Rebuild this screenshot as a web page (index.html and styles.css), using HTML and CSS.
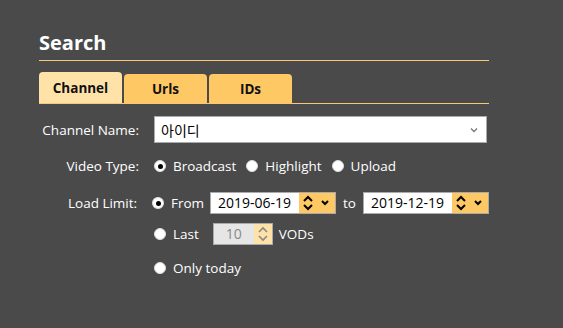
FILE: index.html
```html
<!DOCTYPE html>
<html>
	<head>
		<meta charset="utf-8" />
		<title>Search</title>
		<link rel="stylesheet" href="styles.css">
	</head>
	<body>
		<div class="panel">
			<h2 class="title">Search</h2>
			<div class="tabs">
				<span class="tab on">Channel</span>
				<span class="tab">Urls</span>
				<span class="tab">IDs</span>
			</div>
			<div class="form">
				<div class="row row-name">
					<label class="label">Channel Name:</label>
					<div class="select">
						<span class="select-text">아이디</span>
						<svg class="select-arrow" width="8" height="6" viewBox="0 0 8 6"><path d="M1 1.5 L4 4.5 L7 1.5" fill="none" stroke="#777" stroke-width="1.3"/></svg>
					</div>
				</div>
				<div class="row row-type">
					<label class="label">Video Type:</label>
					<span class="radio on"></span><span class="opt">Broadcast</span>
					<span class="radio"></span><span class="opt">Highlight</span>
					<span class="radio"></span><span class="opt">Upload</span>
				</div>
				<div class="row row-limit">
					<label class="label">Load Limit:</label>
					<span class="radio on"></span><span class="opt">From</span>
					<div class="date">
						<span class="date-text">2019-06-19</span>
						<span class="spin">
							<svg width="36" height="20" viewBox="0 0 36 20"><path d="M5 8 L9 4 L13 8 M5 12 L9 16 L13 12" fill="none" stroke="#000" stroke-width="2"/><path d="M23 8 L26 11 L29 8" fill="none" stroke="#000" stroke-width="2"/></svg>
						</span>
					</div>
					<span class="to">to</span>
					<div class="date">
						<span class="date-text">2019-12-19</span>
						<span class="spin">
							<svg width="36" height="20" viewBox="0 0 36 20"><path d="M5 8 L9 4 L13 8 M5 12 L9 16 L13 12" fill="none" stroke="#000" stroke-width="2"/><path d="M23 8 L26 11 L29 8" fill="none" stroke="#000" stroke-width="2"/></svg>
						</span>
					</div>
				</div>
				<div class="row row-last">
					<span class="radio"></span><span class="opt">Last</span>
					<div class="number">
						<span class="number-text">10</span>
						<span class="nspin">
							<svg width="12" height="20" viewBox="0 0 12 20"><path d="M2 8 L6 4 L10 8 M2 12 L6 16 L10 12" fill="none" stroke="#888" stroke-width="1.6"/></svg>
						</span>
					</div>
					<span class="opt">VODs</span>
				</div>
				<div class="row row-today">
					<span class="radio"></span><span class="opt">Only today</span>
				</div>
			</div>
		</div>
	</body>
</html>
```

FILE: styles.css
```css
*{margin: 0;padding: 0;box-sizing: border-box;}
body{
	background-color: #4a4a4a;
	font-family: "Open Sans", "Noto Sans CJK KR", sans-serif;
	font-size: 13.5px;
	color: #fff;
}
.panel{
	width: 450px;
	margin-left: 39px;
	padding-top: 29px;
}
.title{
	font-size: 20px;
	font-weight: bold;
	line-height: 27px;
	height: 32px;
	border-bottom: 1px solid #f7c977;
}
.tabs{
	display: flex;
	gap: 2px;
	margin-top: 11px;
	border-bottom: 1px solid #f7c977;
}
.tab{
	width: 83px;
	height: 29px;
	line-height: 30px;
	text-align: center;
	font-weight: bold;
	font-size: 13.5px;
	color: #111;
	background-color: #fec864;
	border-radius: 4px 4px 0 0;
	margin-top: 2px;
}
.tab.on{
	background-color: #ffe2a8;
	height: 31px;
	margin-top: 0;
	line-height: 32px;
}
.form{
	display: flex;
	flex-direction: column;
}
.row{
	display: flex;
	align-items: center;
	height: 22px;
}
.label{
	width: 100px;
	text-align: right;
	margin-right: 15px;
}
.row-name{height: 27px;margin-top: 12px;}
.row-type{margin-top: 12px;}
.row-limit{margin-top: 15px;}
.row-last{margin-top: 9px;padding-left: 115px;}
.row-today{margin-top: 12px;padding-left: 115px;}
.select{
	flex: 1;
	height: 27px;
	margin-right: 2px;
	background-color: #fff;
	border: 1px solid #aaa;
	display: flex;
	align-items: center;
	padding: 0 8px 0 6px;
	color: #000;
}
.select-text{flex: 1;font-size: 14px;}
.radio{
	width: 12px;
	height: 12px;
	border-radius: 50%;
	background-color: #fff;
	border: 1px solid #ddd;
	margin-right: 7px;
	position: relative;
}
.radio.on::after{
	content: "";
	position: absolute;
	left: 2.5px;
	top: 2.5px;
	width: 5px;
	height: 5px;
	border-radius: 50%;
	background-color: #000;
}
.opt{margin-right: 10px;}
.row-limit .opt{margin-right: 6px;}
.date{
	display: flex;
	height: 22px;
	border: 1px solid #aaa;
	background-color: #fff;
}
.date-text{
	color: #000;
	font-size: 14px;
	line-height: 20px;
	padding-left: 7px;
	width: 88px;
}
.spin{
	width: 36px;
	background-color: #fec864;
	display: flex;
	align-items: center;
	justify-content: center;
}
.to{margin: 0 7px;}
.number{
	display: flex;
	width: 60px;
	height: 22px;
	border: 1px solid #aaa;
	background-color: #e6e6e6;
	margin-left: 4px;
	margin-right: 6px;
}
.number-text{
	flex: 1;
	color: #888;
	font-size: 14px;
	line-height: 20px;
	text-align: center;
}
.nspin{
	width: 18px;
	background-color: #ffe2a8;
	display: flex;
	align-items: center;
	justify-content: center;
}
```
